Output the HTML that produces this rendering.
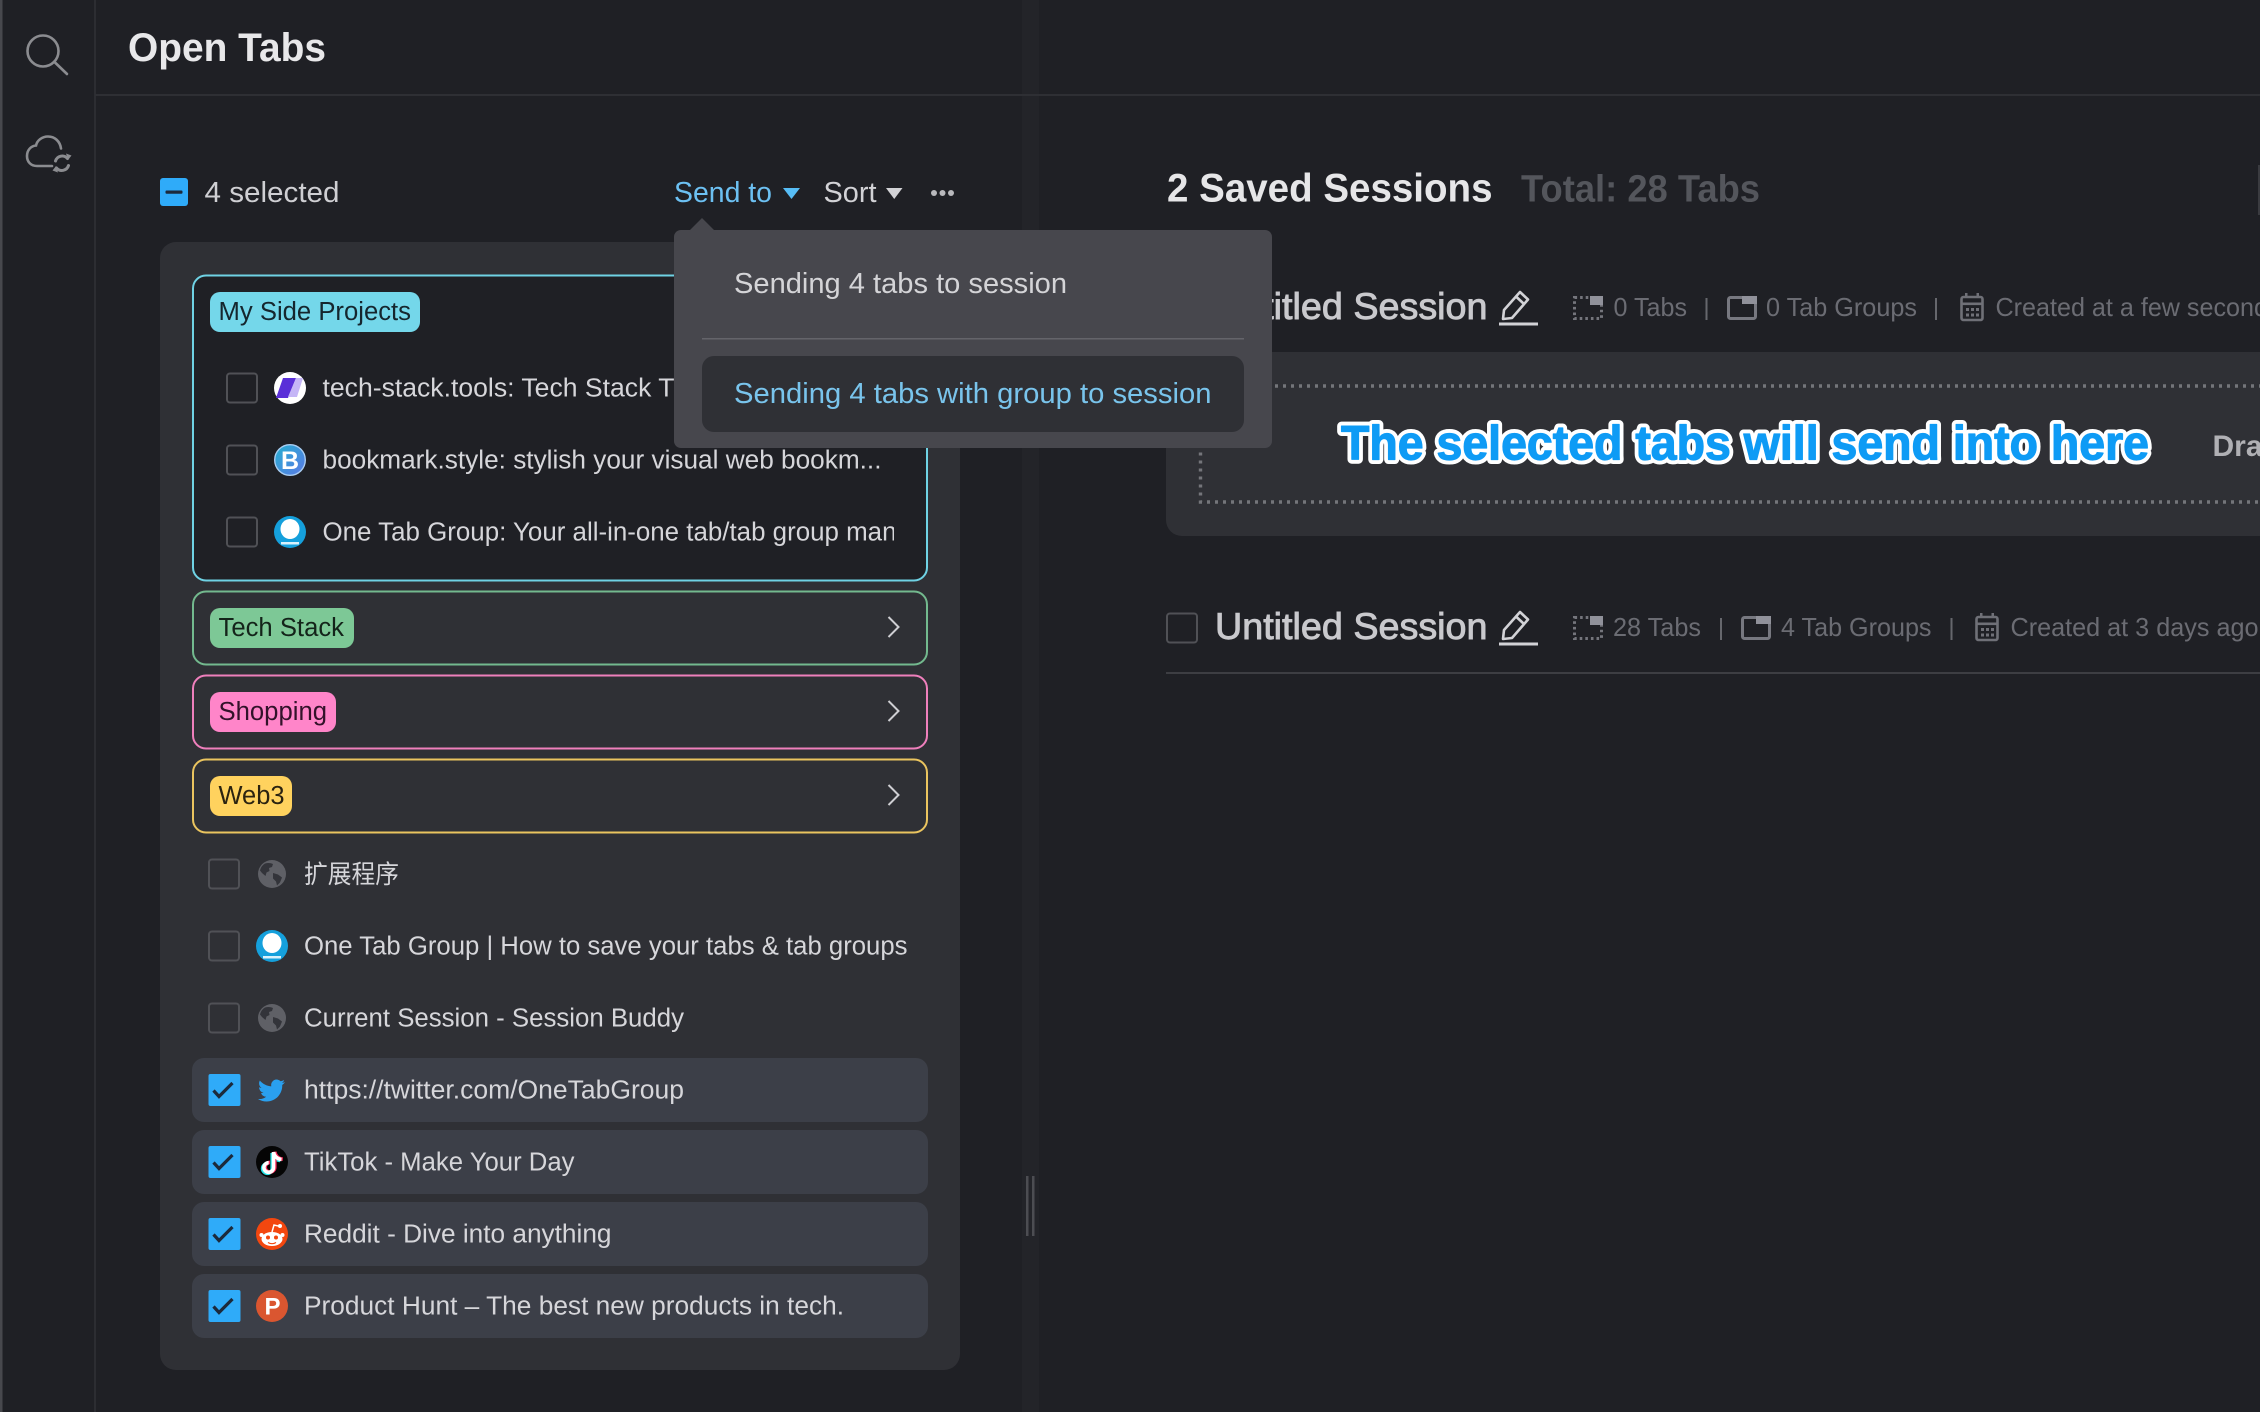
<!DOCTYPE html>
<html lang="en">
<head>
<meta charset="utf-8">
<title>Open Tabs</title>
<style>
html,body{margin:0;padding:0;width:2260px;height:1412px;overflow:hidden;background:#1f2025}
svg{display:block}
text{font-family:"Liberation Sans","Noto Sans CJK SC",sans-serif;white-space:pre}
.row{font-size:25.5px;fill:#d6d6da}
.tag{font-size:25.5px}
.meta{font-size:26px;fill:#6b6c73}
.bar{font-size:28.5px}
</style>
</head>
<body>
<svg xmlns="http://www.w3.org/2000/svg" width="2260" height="1412" viewBox="0 0 2260 1412">
<defs>
  <clipPath id="clipRow"><rect x="300" y="500" width="594" height="60"/></clipPath>
  <linearGradient id="bm" x1="0" y1="0" x2="1" y2="1"><stop offset="0" stop-color="#25b0d0"/><stop offset="1" stop-color="#5b78e6"/></linearGradient>
  <g id="cbx"><rect x="1" y="1" width="30" height="29" rx="3" fill="none" stroke="#505156" stroke-width="2"/></g>
  <g id="cbc"><rect x="0" y="0" width="32" height="32" rx="2" fill="#2fabf9"/><path d="M5 16.500l5.500 6L24 9" fill="none" stroke="#1c2a3c" stroke-width="3.200"/></g>
  <g id="onetab"><circle cx="16" cy="16" r="16" fill="#15a0dc"/><ellipse cx="16" cy="13" rx="9.500" ry="10" fill="#fff"/><rect x="7" y="26" width="18" height="2.500" fill="#d9f1fb"/></g>
  <g id="globe"><circle cx="14" cy="14" r="14" fill="#5f6066"/><path d="M7 3.500c3-1 6-.5 8 .5l-1 3-3 1 .5 3-3 1.500-1 3.500-3.500-3-2-2.500C3 7 4.500 5 7 3.500zM15 13l5 1.500 4 3-2 5-3 3-1-4-3-3z" fill="#33343a"/></g>
  <g id="pencil" fill="none" stroke="#d2d2d6" stroke-width="2.600" stroke-linejoin="round">
    <path d="M3 28l1-9L20 1l8 7.500L12 27zM16 5.500l8 7.500"/>
    <path d="M-1 33h39" stroke-width="3"/>
  </g>
  <g id="ictabs">
    <rect x="1.500" y="1.500" width="27" height="21" fill="none" stroke="#74757c" stroke-width="3" stroke-dasharray="2.600 3"/>
    <rect x="17" y="0" width="13" height="9" fill="#90919a"/>
  </g>
  <g id="icgroup">
    <rect x="1.500" y="1.500" width="27" height="21" rx="2" fill="none" stroke="#777880" stroke-width="3"/>
    <rect x="15" y="0" width="15" height="8" fill="#90919a"/>
  </g>
  <g id="iccal" fill="#6f7077">
    <rect x="1.500" y="5" width="21" height="23" rx="2" fill="none" stroke="#6f7077" stroke-width="2.600"/>
    <rect x="1" y="10.500" width="22" height="2.600"/>
    <rect x="5" y="1" width="2.500" height="5"/><rect x="16.500" y="1" width="2.500" height="5"/>
    <rect x="6" y="16" width="3" height="3"/><rect x="11" y="16" width="3" height="3"/><rect x="16" y="16" width="3" height="3"/>
    <rect x="6" y="21.500" width="3" height="3"/><rect x="11" y="21.500" width="3" height="3"/><rect x="16" y="21.500" width="3" height="3"/>
  </g>
</defs>

<!-- page -->
<rect width="2260" height="1412" fill="#1f2025"/>
<rect x="0" y="0" width="2.500" height="1412" fill="#47484d"/>
<rect x="94" y="0" width="2" height="1412" fill="#2c2d32"/>
<rect x="1022" y="0" width="17" height="1412" fill="#232429"/>
<rect x="1026" y="1176" width="2.500" height="60" fill="#4c4d52"/>
<rect x="1032" y="1176" width="2.500" height="60" fill="#4c4d52"/>
<rect x="95" y="94" width="2165" height="2" fill="#2e2f34"/>
<rect x="2258" y="165" width="2" height="50" fill="#3a3b40"/>

<!-- sidebar icons -->
<g fill="none" stroke="#8b8c90" stroke-width="2.600" stroke-linecap="round">
  <circle cx="43" cy="51" r="15.500"/>
  <path d="M55 62.500L67 74"/>
  <path d="M52 166H37c-6 0-10-4-10-10s4-10 9-10.500c1-5 6-9 12-9 7 0 12 5 13 12"/>
  <g stroke-width="3">
    <path d="M55.500 161a7 7 0 0 1 12-2.500"/>
    <path d="M68.500 165.500a7 7 0 0 1-12 2.500"/>
  </g>
</g>
<path d="M66 153.500l5.500 2-3.500 4.500zM58 172.500l-5.500-2 3.500-4.500z" fill="#8b8c90"/>

<!-- left header -->
<text x="128" y="61" font-size="40" font-weight="700" fill="#e8e8ea" textLength="198" lengthAdjust="spacingAndGlyphs">Open Tabs</text>

<rect x="160" y="178" width="28" height="28" rx="3" fill="#2fabf9"/>
<rect x="165.500" y="190.500" width="17" height="3.200" rx="1" fill="#1c2a3c"/>
<text class="bar" x="204.500" y="202" fill="#cfcfd3" textLength="135" lengthAdjust="spacingAndGlyphs">4 selected</text>

<text class="bar" x="674" y="202" fill="#6cc0f2" textLength="98" lengthAdjust="spacingAndGlyphs">Send to</text>
<path d="M783 188h17l-8.500 11z" fill="#57bdf6"/>
<text class="bar" x="823.500" y="202" fill="#d2d2d6" textLength="53" lengthAdjust="spacingAndGlyphs">Sort</text>
<path d="M886 188h16.500l-8.250 11z" fill="#d2d2d6"/>
<g fill="#b9b9bd"><circle cx="934" cy="193" r="3"/><circle cx="942.500" cy="193" r="3"/><circle cx="951" cy="193" r="3"/></g>

<!-- open tabs panel -->
<rect x="160" y="242" width="800" height="1128" rx="16" fill="#2f3035"/>

<!-- group: My Side Projects -->
<rect x="193" y="275.500" width="734" height="305" rx="13" fill="#1f2025" stroke="#6fd2e4" stroke-width="2"/>
<rect x="210" y="292" width="210" height="40" rx="10" fill="#74d7ea"/>
<text class="tag" x="218.500" y="320" fill="#15262e" textLength="192.500" lengthAdjust="spacingAndGlyphs">My Side Projects</text>

<use href="#cbx" x="226" y="372.500"/>
<circle cx="290" cy="388" r="16" fill="#fff"/>
<path d="M283 378h13l-8 20h-12z" fill="#5a2fd8"/>
<path d="M296 378h7l-6 19h-9z" fill="#c5b6f6"/>
<text class="row" x="322.500" y="396.500" textLength="352" lengthAdjust="spacingAndGlyphs">tech-stack.tools: Tech Stack T</text>

<use href="#cbx" x="226" y="444.500"/>
<circle cx="290" cy="460" r="15.300" fill="url(#bm)" stroke="#a9cdf2" stroke-width="1.400"/>
<text x="290" y="469" font-size="25" font-weight="700" fill="#fff" text-anchor="middle">B</text>
<text class="row" x="322.500" y="468.500" textLength="559" lengthAdjust="spacingAndGlyphs">bookmark.style: stylish your visual web bookm...</text>

<use href="#cbx" x="226" y="516.500"/>
<use href="#onetab" x="274" y="516"/>
<g clip-path="url(#clipRow)"><text class="row" x="322.500" y="540.500" textLength="574" lengthAdjust="spacingAndGlyphs">One Tab Group: Your all-in-one tab/tab group man</text></g>

<!-- collapsed groups -->
<rect x="193" y="591.500" width="734" height="73" rx="13" fill="none" stroke="#73b98e" stroke-width="2"/>
<rect x="210" y="608" width="144" height="40" rx="10" fill="#7dc896"/>
<text class="tag" x="218.500" y="636" fill="#14241a" textLength="125.500" lengthAdjust="spacingAndGlyphs">Tech Stack</text>
<path d="M888.500 617l10 10-10 10" fill="none" stroke="#cfcfd3" stroke-width="2"/>

<rect x="193" y="675.500" width="734" height="73" rx="13" fill="none" stroke="#ef7fbc" stroke-width="2"/>
<rect x="210" y="692" width="126" height="40" rx="10" fill="#ff85c9"/>
<text class="tag" x="218.500" y="720" fill="#33122a" textLength="108.500" lengthAdjust="spacingAndGlyphs">Shopping</text>
<path d="M888.500 701l10 10-10 10" fill="none" stroke="#cfcfd3" stroke-width="2"/>

<rect x="193" y="759.500" width="734" height="73" rx="13" fill="none" stroke="#eac45f" stroke-width="2"/>
<rect x="210" y="776" width="82" height="40" rx="10" fill="#ffd25e"/>
<text class="tag" x="218.500" y="804" fill="#2b2310" textLength="66" lengthAdjust="spacingAndGlyphs">Web3</text>
<path d="M888.500 785l10 10-10 10" fill="none" stroke="#cfcfd3" stroke-width="2"/>

<!-- plain tabs -->
<use href="#cbx" x="208" y="858.500"/>
<use href="#globe" x="258" y="860"/>
<text class="row" x="304" y="883" textLength="95" lengthAdjust="spacingAndGlyphs">扩展程序</text>

<use href="#cbx" x="208" y="930.500"/>
<use href="#onetab" x="256" y="930"/>
<text class="row" x="304" y="954.500" textLength="603.500" lengthAdjust="spacingAndGlyphs">One Tab Group | How to save your tabs &amp; tab groups</text>

<use href="#cbx" x="208" y="1002.500"/>
<use href="#globe" x="258" y="1004"/>
<text class="row" x="304" y="1026.500" textLength="380" lengthAdjust="spacingAndGlyphs">Current Session - Session Buddy</text>

<!-- selected tabs -->
<rect x="192" y="1058" width="736" height="64" rx="12" fill="#3c3f48"/>
<rect x="192" y="1130" width="736" height="64" rx="12" fill="#3c3f48"/>
<rect x="192" y="1202" width="736" height="64" rx="12" fill="#3c3f48"/>
<rect x="192" y="1274" width="736" height="64" rx="12" fill="#3c3f48"/>

<use href="#cbc" x="208.500" y="1074"/>
<use href="#cbc" x="208.500" y="1146"/>
<use href="#cbc" x="208.500" y="1218"/>
<use href="#cbc" x="208.500" y="1290"/>

<path transform="translate(258 1077) scale(1.125)" fill="#2aa0ef" d="M23.953 4.570a10 10 0 01-2.825.775 4.958 4.958 0 002.163-2.723c-.951.555-2.005.959-3.127 1.184a4.920 4.920 0 00-8.384 4.482C7.690 8.095 4.067 6.130 1.640 3.162a4.822 4.822 0 00-.666 2.475c0 1.710.870 3.213 2.188 4.096a4.904 4.904 0 01-2.228-.616v.060a4.923 4.923 0 003.946 4.827 4.996 4.996 0 01-2.212.085 4.936 4.936 0 004.604 3.417 9.867 9.867 0 01-6.102 2.105c-.390 0-.779-.023-1.170-.067a13.995 13.995 0 007.557 2.209c9.053 0 13.998-7.496 13.998-13.985 0-.210 0-.420-.015-.630A9.935 9.935 0 0024 4.590z"/>
<text class="row" x="304" y="1098.500" textLength="380" lengthAdjust="spacingAndGlyphs">https://twitter.com/OneTabGroup</text>

<circle cx="272" cy="1162" r="16" fill="#050505"/>
<g fill="none" stroke-width="3.600">
  <path d="M273.500 1152v15.500a4.800 4.800 0 1 1-4.800-4.800M273.500 1152c.5 4 3.500 7 8 7.500" stroke="#25e4e8" transform="translate(-1.300 1)"/>
  <path d="M273.500 1152v15.500a4.800 4.800 0 1 1-4.800-4.800M273.500 1152c.5 4 3.500 7 8 7.500" stroke="#fa2a5a" transform="translate(1.300 -.3)"/>
  <path d="M273.500 1152v15.500a4.800 4.800 0 1 1-4.800-4.800M273.500 1152c.5 4 3.500 7 8 7.500" stroke="#fff"/>
</g>
<text class="row" x="304" y="1170.500" textLength="270.500" lengthAdjust="spacingAndGlyphs">TikTok - Make Your Day</text>

<circle cx="272" cy="1234" r="16" fill="#f3470f"/>
<ellipse cx="272" cy="1239" rx="10.500" ry="7" fill="#fff"/>
<circle cx="261.500" cy="1235" r="2" fill="#fff"/><circle cx="282.500" cy="1235" r="2" fill="#fff"/>
<path d="M272 1232l2-7 5 1.200" fill="none" stroke="#fff" stroke-width="1.500"/>
<circle cx="280" cy="1226" r="2" fill="#fff"/>
<circle cx="268" cy="1237.500" r="2" fill="#f3470f"/><circle cx="276" cy="1237.500" r="2" fill="#f3470f"/>
<path d="M268 1242.500c2.500 1.500 5.500 1.500 8 0" fill="none" stroke="#f3470f" stroke-width="1.200"/>
<text class="row" x="304" y="1242.500" textLength="307.500" lengthAdjust="spacingAndGlyphs">Reddit - Dive into anything</text>

<circle cx="272" cy="1306" r="16" fill="#da5630"/>
<text x="272.500" y="1314.500" font-size="24" font-weight="700" fill="#fff" text-anchor="middle">P</text>
<text class="row" x="304" y="1314.500" textLength="540" lengthAdjust="spacingAndGlyphs">Product Hunt – The best new products in tech.</text>

<!-- right pane heading -->
<text x="1167" y="201.500" font-size="40" font-weight="700" fill="#e6e6e8" textLength="325.500" lengthAdjust="spacingAndGlyphs">2 Saved Sessions</text>
<text x="1521" y="201.500" font-size="38" font-weight="700" fill="#54565c" textLength="239" lengthAdjust="spacingAndGlyphs">Total: 28 Tabs</text>

<!-- session 1 -->
<use href="#cbx" x="1166" y="292"/>
<text x="1215" y="319" font-size="37" fill="#c9c9cd" stroke="#c9c9cd" stroke-width=".9" textLength="272.500" lengthAdjust="spacingAndGlyphs">Untitled Session</text>
<use href="#pencil" x="1500" y="291"/>
<use href="#ictabs" x="1573" y="296"/>
<text class="meta" x="1613.500" y="316" textLength="73.500" lengthAdjust="spacingAndGlyphs">0 Tabs</text>
<rect x="1705.500" y="298" width="2" height="22" fill="#66676d"/>
<use href="#icgroup" x="1727" y="296"/>
<text class="meta" x="1766" y="316" textLength="151" lengthAdjust="spacingAndGlyphs">0 Tab Groups</text>
<rect x="1935" y="298" width="2" height="22" fill="#66676d"/>
<use href="#iccal" x="1960" y="292"/>
<text class="meta" x="1995.500" y="316" textLength="334" lengthAdjust="spacingAndGlyphs">Created at a few seconds ago</text>

<rect x="1166" y="352" width="1130" height="184" rx="16" fill="#2f3035"/>
<path d="M2262 386H1200.500V502H2262" fill="none" stroke="#74757a" stroke-width="3.400" stroke-dasharray="3 5"/>
<text x="2212.500" y="456" font-size="30" font-weight="700" fill="#b0b0b4">Drag tabs here</text>
<text x="1341" y="459.500" font-size="48" font-weight="700" fill="#0e9bf5" stroke="#fff" stroke-width="9" stroke-linejoin="round" textLength="808" lengthAdjust="spacingAndGlyphs">The selected tabs will send into here</text>
<text x="1341" y="459.500" font-size="48" font-weight="700" fill="#0e9bf5" stroke="#0e9bf5" stroke-width="1.200" stroke-linejoin="round" textLength="808" lengthAdjust="spacingAndGlyphs">The selected tabs will send into here</text>

<!-- session 2 -->
<use href="#cbx" x="1166" y="612.500"/>
<text x="1215" y="639" font-size="37" fill="#c9c9cd" stroke="#c9c9cd" stroke-width=".9" textLength="272.500" lengthAdjust="spacingAndGlyphs">Untitled Session</text>
<use href="#pencil" x="1500" y="611"/>
<use href="#ictabs" x="1573" y="616"/>
<text class="meta" x="1613" y="636" textLength="88" lengthAdjust="spacingAndGlyphs">28 Tabs</text>
<rect x="1720" y="618" width="2" height="22" fill="#66676d"/>
<use href="#icgroup" x="1741" y="616"/>
<text class="meta" x="1781" y="636" textLength="150.500" lengthAdjust="spacingAndGlyphs">4 Tab Groups</text>
<rect x="1950.500" y="618" width="2" height="22" fill="#66676d"/>
<use href="#iccal" x="1975" y="612"/>
<text class="meta" x="2010.500" y="636" textLength="248" lengthAdjust="spacingAndGlyphs">Created at 3 days ago</text>
<rect x="1166" y="672" width="1094" height="2" fill="#3d3e43"/>

<!-- popup -->
<path d="M702 218l12 12h-24z" fill="#47474d"/>
<rect x="674" y="230" width="598" height="218" rx="7" fill="#47474d"/>
<text class="bar" x="734" y="293" fill="#d4d4d7" textLength="333" lengthAdjust="spacingAndGlyphs">Sending 4 tabs to session</text>
<rect x="702" y="338" width="542" height="1.500" fill="#64646a"/>
<rect x="702" y="356" width="542" height="76" rx="12" fill="#2f3035"/>
<text class="bar" x="734" y="403" fill="#79c4ec" textLength="477.500" lengthAdjust="spacingAndGlyphs">Sending 4 tabs with group to session</text>
</svg>
</body>
</html>
